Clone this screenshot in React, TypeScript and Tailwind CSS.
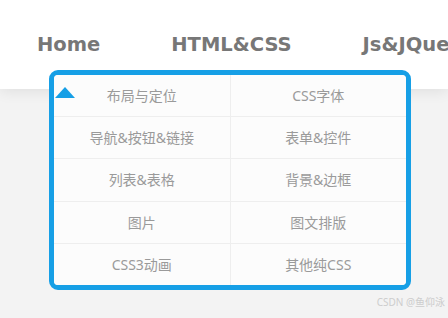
import React from "react";

const items = [
  "布局与定位",
  "CSS字体",
  "导航&按钮&链接",
  "表单&控件",
  "列表&表格",
  "背景&边框",
  "图片",
  "图文排版",
  "CSS3动画",
  "其他纯CSS",
];

const navFont = { fontFamily: '"DejaVu Sans", sans-serif' };

export default function App() {
  return (
    <div
      className="relative w-[448px] h-[318px] overflow-hidden bg-[#f3f3f3]"
      style={{ fontFamily: '"Noto Sans", "Noto Sans CJK SC", sans-serif' }}
    >
      <div className="relative z-0 h-[89px] bg-white shadow-[0_2px_14px_rgba(0,0,0,0.09)] flex items-center pl-[37px] gap-[71px] whitespace-nowrap">
        <span style={navFont} className="text-[19.5px] font-bold text-[#777] leading-none">Home</span>
        <span style={navFont} className="text-[19.5px] font-bold text-[#777] leading-none">HTML&amp;CSS</span>
        <span style={navFont} className="text-[19.5px] font-bold text-[#777] leading-none">Js&amp;JQuery</span>
      </div>

      <div className="absolute left-[49px] top-[70px] w-[362px] h-[220px] z-10 border-[5px] border-[#169fe6] rounded-[9px] bg-[#eeeeee] overflow-hidden">
        <div className="grid grid-cols-2 gap-px h-full">
          {items.map((t) => (
            <div
              key={t}
              className="bg-[#fcfcfc] flex items-center justify-center text-[14px] text-[#9a9a9a]"
            >
              {t}
            </div>
          ))}
        </div>
        <div className="absolute left-[1px] top-[12px] w-0 h-0 border-l-[10px] border-r-[10px] border-b-[11px] border-l-transparent border-r-transparent border-b-[#169fe6]" />
      </div>

      <div className="absolute right-[3px] top-[295px] text-[10px] text-[#cdcdcd]">
        CSDN @鱼仰泳
      </div>
    </div>
  );
}
